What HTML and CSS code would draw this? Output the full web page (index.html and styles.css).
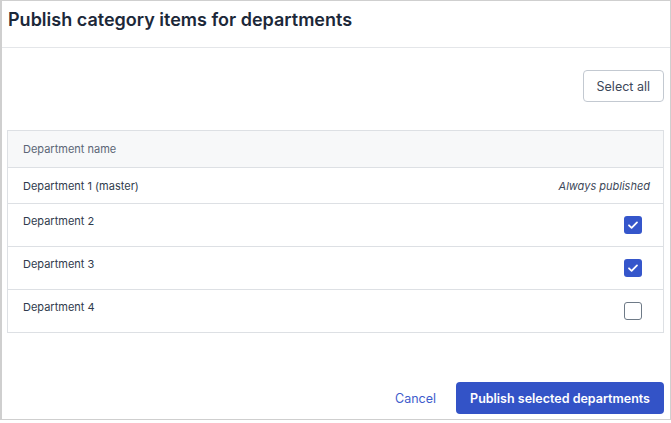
FILE: index.html
```html
<!DOCTYPE html>
<html>
<head>
<meta charset="utf-8">
<link rel="stylesheet" href="styles.css">
</head>
<body>
<div class="dialog">
  <div class="dialog-header">
    <h1 class="title">Publish category items for departments</h1>
  </div>
  <div class="dialog-body">
    <div class="toolbar">
      <button class="btn btn-outline">Select all</button>
    </div>
    <div class="table">
      <div class="row row-head">
        <div class="cell-name">Department name</div>
      </div>
      <div class="row row-master">
        <div class="cell-name">Department 1 (master)</div>
        <div class="cell-note">Always published</div>
      </div>
      <div class="row row-check">
        <div class="cell-name">Department 2</div>
        <div class="cell-check"><span class="checkbox checked"><svg viewBox="0 0 18 18" width="18" height="18"><path d="M5 9.3l2.6 2.5L13 6.4" fill="none" stroke="#fff" stroke-width="1.8" stroke-linecap="round" stroke-linejoin="round"/></svg></span></div>
      </div>
      <div class="row row-check">
        <div class="cell-name">Department 3</div>
        <div class="cell-check"><span class="checkbox checked"><svg viewBox="0 0 18 18" width="18" height="18"><path d="M5 9.3l2.6 2.5L13 6.4" fill="none" stroke="#fff" stroke-width="1.8" stroke-linecap="round" stroke-linejoin="round"/></svg></span></div>
      </div>
      <div class="row row-check">
        <div class="cell-name">Department 4</div>
        <div class="cell-check"><span class="checkbox"></span></div>
      </div>
    </div>
  </div>
  <div class="dialog-footer">
    <button class="btn btn-link">Cancel</button>
    <button class="btn btn-primary">Publish selected departments</button>
  </div>
</div>
</body>
</html>
```
FILE: styles.css
```css
* { box-sizing: border-box; }
html, body { margin: 0; padding: 0; background: #fff; }
body { font-family: Inter, "Noto Sans", sans-serif; color: #2f3b4c; }

.dialog {
  width: 671px;
  height: 420px;
  border: 1px solid #cfcfcf;
  border-left-width: 2px;
  display: flex;
  flex-direction: column;
}

.dialog-header {
  padding: 8px 6px 16px;
  border-bottom: 1px solid #e4e6e9;
}
.title {
  margin: 0;
  font-size: 18px;
  line-height: 22px;
  font-weight: 600;
  color: #1c2839;
}

.dialog-body {
  padding: 22px 6px 0 5px;
  display: flex;
  flex-direction: column;
}
.toolbar {
  display: flex;
  justify-content: flex-end;
  margin-bottom: 28px;
}

.btn {
  font-family: Inter, "Noto Sans", sans-serif;
  font-size: 12.5px;
  height: 32px;
  border-radius: 4px;
  cursor: pointer;
  white-space: nowrap;
}
.btn-outline {
  background: #fff;
  border: 1px solid #c3c9d1;
  color: #3d4859;
  padding: 0 13px;
}

.table {
  border: 1px solid #dde0e4;
  font-size: 11px;
  line-height: 16px;
}
.row {
  display: flex;
  justify-content: space-between;
  border-top: 1px solid #dde0e4;
}
.row:first-child { border-top: 0; }
.row-head {
  background: #f7f8f9;
  color: #5b6676;
  padding: 10px 15px;
  height: 36px;
}
.row-master {
  padding: 10px 13px 9px 15px;
  align-items: center;
}
.cell-note {
  font-style: italic;
  color: #3d4859;
  font-size: 11px;
}
.row-check {
  align-items: flex-start;
}
.row-check .cell-name {
  padding: 9px 15px 0;
}
.cell-check {
  padding: 12px 21px 12px 0;
  display: flex;
}
.checkbox {
  width: 18px;
  height: 18px;
  border-radius: 3px;
  border: 1.5px solid #6e7a87;
  background: #fff;
  display: block;
}
.checkbox.checked {
  border: 0;
  background: #3556cb;
}
.checkbox svg { display: block; }

.dialog-footer {
  margin-top: auto;
  padding: 0 6px 5px;
  display: flex;
  justify-content: flex-end;
  align-items: center;
  gap: 20px;
}
.btn-link {
  background: none;
  border: 0;
  color: #3d5ccc;
  padding: 0;
}
.btn-primary {
  background: #3353c7;
  border: 0;
  color: #fff;
  font-weight: 600;
  padding: 0 14px;
}
```
